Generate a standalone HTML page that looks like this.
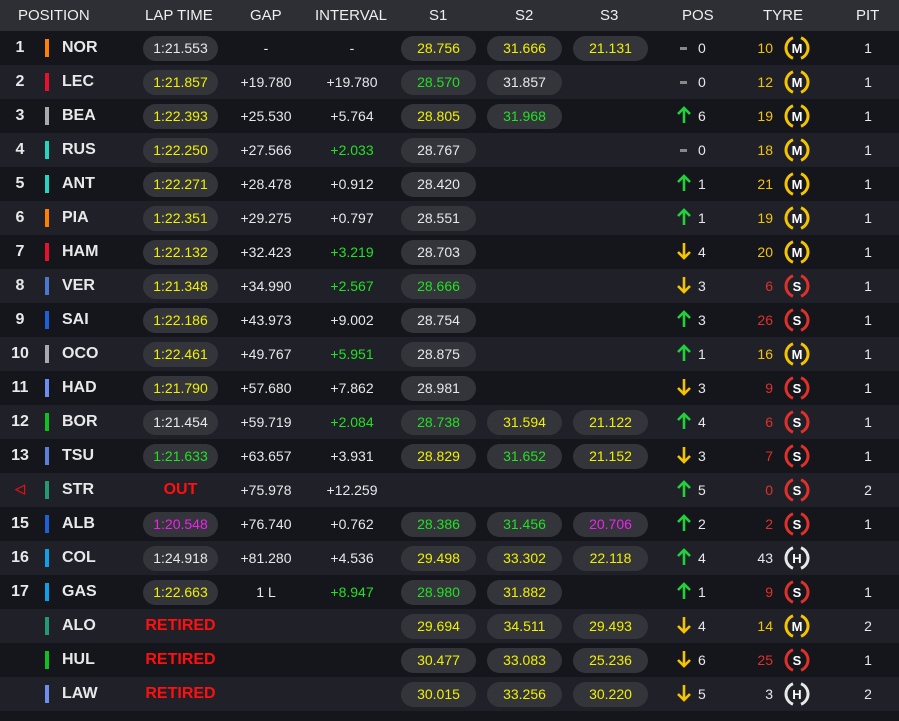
<!DOCTYPE html><html><head><meta charset="utf-8"><style>
*{margin:0;padding:0;box-sizing:border-box}
body{width:899px;height:721px;background:#15161c;font-family:"Liberation Sans",sans-serif;color:#e8e8ea;overflow:hidden;position:relative}
.h{position:absolute;left:0;top:0;width:899px;height:31px;background:#2e2f35;font-size:15px;color:#eee}
.h span{position:absolute;top:7px;text-align:center}
.r{position:relative;height:34px;background:#15161c;font-size:14px}
.r:nth-child(even){background:#202128}
#rows{position:absolute;top:31px;left:0;width:899px}
.r>*{position:absolute}
.p{left:4px;width:32px;text-align:center;top:8px;font-weight:bold;font-size:16px}
.b{left:45px;top:8px;width:4px;height:18px}
.n{left:62px;top:8px;font-weight:bold;font-size:16px}
.pl{top:5px;height:25px;width:75px;border-radius:13px;background:#34353b;text-align:center;line-height:25px}
.lt{left:143px}.s1{left:401px}.s2{left:487px}.s3{left:573px}
.g{left:226px;width:80px;text-align:center;top:9px}
.iv{left:312px;width:80px;text-align:center;top:9px}
.ar{left:676px;top:6px;width:16px;height:20px}
.pn{left:698px;top:9px}
.tl{left:740px;width:33px;text-align:right;top:9px}
.ty{left:784px;top:4px}
.pt{left:848px;width:40px;text-align:center;top:9px}
.txt{left:143px;width:75px;text-align:center;top:8px;color:#ff1010;font-weight:bold;font-size:16px}
.y{color:#f0f000}.gr{color:#22e022}.pu{color:#ee22ee}.ty1{color:#f5c400}.tr{color:#e0302a}
.dash{left:680px;top:16px;width:7px;height:3px;background:#888}
</style></head><body>
<svg width="0" height="0" style="position:absolute"><defs>
<symbol id="up" viewBox="0 0 16 20"><path d="M8 3V18M2 9L8 3L14 9" stroke="#22d03c" stroke-width="2.6" fill="none"/></symbol>
<symbol id="dn" viewBox="0 0 16 20"><path d="M8 2V17M2 11L8 17L14 11" stroke="#f5c400" stroke-width="2.6" fill="none"/></symbol>
<symbol id="tM" viewBox="0 0 26 26"><path d="M9 2.75A11 11 0 0 0 9 23.25M17 2.75A11 11 0 0 1 17 23.25" stroke="#f5c400" stroke-width="3" fill="none"/><text x="13" y="18" text-anchor="middle" font-family="Liberation Sans" font-weight="bold" font-size="13" fill="#fff">M</text></symbol>
<symbol id="tS" viewBox="0 0 26 26"><path d="M9 2.75A11 11 0 0 0 9 23.25M17 2.75A11 11 0 0 1 17 23.25" stroke="#e0302a" stroke-width="3" fill="none"/><text x="13" y="18" text-anchor="middle" font-family="Liberation Sans" font-weight="bold" font-size="13" fill="#fff">S</text></symbol>
<symbol id="tH" viewBox="0 0 26 26"><path d="M9 2.75A11 11 0 0 0 9 23.25M17 2.75A11 11 0 0 1 17 23.25" stroke="#e8e8e8" stroke-width="3" fill="none"/><text x="13" y="18" text-anchor="middle" font-family="Liberation Sans" font-weight="bold" font-size="13" fill="#fff">H</text></symbol>
</defs></svg>
<div class="h"><span style="left:18px">POSITION</span><span style="left:145px">LAP TIME</span><span style="left:250px">GAP</span><span style="left:315px">INTERVAL</span><span style="left:429px">S1</span><span style="left:515px">S2</span><span style="left:600px">S3</span><span style="left:682px">POS</span><span style="left:763px">TYRE</span><span style="left:856px">PIT</span></div>
<div id="rows">
<div class="r"><span class="p">1</span><i class="b" style="background:#ff8000"></i><span class="n">NOR</span><span class="pl lt">1:21.553</span><span class="g">-</span><span class="iv">-</span><span class="pl s1 y">28.756</span><span class="pl s2 y">31.666</span><span class="pl s3 y">21.131</span><i class="dash"></i><span class="pn">0</span><span class="tl ty1">10</span><svg class="ty" width="26" height="26"><use href="#tM"/></svg><span class="pt">1</span></div>
<div class="r"><span class="p">2</span><i class="b" style="background:#e8102d"></i><span class="n">LEC</span><span class="pl lt y">1:21.857</span><span class="g">+19.780</span><span class="iv">+19.780</span><span class="pl s1 gr">28.570</span><span class="pl s2">31.857</span><i class="dash"></i><span class="pn">0</span><span class="tl ty1">12</span><svg class="ty" width="26" height="26"><use href="#tM"/></svg><span class="pt">1</span></div>
<div class="r"><span class="p">3</span><i class="b" style="background:#a8aaae"></i><span class="n">BEA</span><span class="pl lt y">1:22.393</span><span class="g">+25.530</span><span class="iv">+5.764</span><span class="pl s1 y">28.805</span><span class="pl s2 gr">31.968</span><svg class="ar"><use href="#up"/></svg><span class="pn">6</span><span class="tl ty1">19</span><svg class="ty" width="26" height="26"><use href="#tM"/></svg><span class="pt">1</span></div>
<div class="r"><span class="p">4</span><i class="b" style="background:#27d4c0"></i><span class="n">RUS</span><span class="pl lt y">1:22.250</span><span class="g">+27.566</span><span class="iv gr">+2.033</span><span class="pl s1">28.767</span><i class="dash"></i><span class="pn">0</span><span class="tl ty1">18</span><svg class="ty" width="26" height="26"><use href="#tM"/></svg><span class="pt">1</span></div>
<div class="r"><span class="p">5</span><i class="b" style="background:#27d4c0"></i><span class="n">ANT</span><span class="pl lt y">1:22.271</span><span class="g">+28.478</span><span class="iv">+0.912</span><span class="pl s1">28.420</span><svg class="ar"><use href="#up"/></svg><span class="pn">1</span><span class="tl ty1">21</span><svg class="ty" width="26" height="26"><use href="#tM"/></svg><span class="pt">1</span></div>
<div class="r"><span class="p">6</span><i class="b" style="background:#ff8000"></i><span class="n">PIA</span><span class="pl lt y">1:22.351</span><span class="g">+29.275</span><span class="iv">+0.797</span><span class="pl s1">28.551</span><svg class="ar"><use href="#up"/></svg><span class="pn">1</span><span class="tl ty1">19</span><svg class="ty" width="26" height="26"><use href="#tM"/></svg><span class="pt">1</span></div>
<div class="r"><span class="p">7</span><i class="b" style="background:#e8102d"></i><span class="n">HAM</span><span class="pl lt y">1:22.132</span><span class="g">+32.423</span><span class="iv gr">+3.219</span><span class="pl s1">28.703</span><svg class="ar"><use href="#dn"/></svg><span class="pn">4</span><span class="tl ty1">20</span><svg class="ty" width="26" height="26"><use href="#tM"/></svg><span class="pt">1</span></div>
<div class="r"><span class="p">8</span><i class="b" style="background:#4a78d0"></i><span class="n">VER</span><span class="pl lt y">1:21.348</span><span class="g">+34.990</span><span class="iv gr">+2.567</span><span class="pl s1 gr">28.666</span><svg class="ar"><use href="#dn"/></svg><span class="pn">3</span><span class="tl tr">6</span><svg class="ty" width="26" height="26"><use href="#tS"/></svg><span class="pt">1</span></div>
<div class="r"><span class="p">9</span><i class="b" style="background:#1e60d8"></i><span class="n">SAI</span><span class="pl lt y">1:22.186</span><span class="g">+43.973</span><span class="iv">+9.002</span><span class="pl s1">28.754</span><svg class="ar"><use href="#up"/></svg><span class="pn">3</span><span class="tl tr">26</span><svg class="ty" width="26" height="26"><use href="#tS"/></svg><span class="pt">1</span></div>
<div class="r"><span class="p">10</span><i class="b" style="background:#a8aaae"></i><span class="n">OCO</span><span class="pl lt y">1:22.461</span><span class="g">+49.767</span><span class="iv gr">+5.951</span><span class="pl s1">28.875</span><svg class="ar"><use href="#up"/></svg><span class="pn">1</span><span class="tl ty1">16</span><svg class="ty" width="26" height="26"><use href="#tM"/></svg><span class="pt">1</span></div>
<div class="r"><span class="p">11</span><i class="b" style="background:#6c8ef0"></i><span class="n">HAD</span><span class="pl lt y">1:21.790</span><span class="g">+57.680</span><span class="iv">+7.862</span><span class="pl s1">28.981</span><svg class="ar"><use href="#dn"/></svg><span class="pn">3</span><span class="tl tr">9</span><svg class="ty" width="26" height="26"><use href="#tS"/></svg><span class="pt">1</span></div>
<div class="r"><span class="p">12</span><i class="b" style="background:#10c020"></i><span class="n">BOR</span><span class="pl lt">1:21.454</span><span class="g">+59.719</span><span class="iv gr">+2.084</span><span class="pl s1 gr">28.738</span><span class="pl s2 y">31.594</span><span class="pl s3 y">21.122</span><svg class="ar"><use href="#up"/></svg><span class="pn">4</span><span class="tl tr">6</span><svg class="ty" width="26" height="26"><use href="#tS"/></svg><span class="pt">1</span></div>
<div class="r"><span class="p">13</span><i class="b" style="background:#5a80d8"></i><span class="n">TSU</span><span class="pl lt gr">1:21.633</span><span class="g">+63.657</span><span class="iv">+3.931</span><span class="pl s1 y">28.829</span><span class="pl s2 gr">31.652</span><span class="pl s3 y">21.152</span><svg class="ar"><use href="#dn"/></svg><span class="pn">3</span><span class="tl tr">7</span><svg class="ty" width="26" height="26"><use href="#tS"/></svg><span class="pt">1</span></div>
<div class="r"><span class="p" style="color:#e01010;font-size:13px">◁</span><i class="b" style="background:#229971"></i><span class="n">STR</span><span class="txt">OUT</span><span class="g">+75.978</span><span class="iv">+12.259</span><svg class="ar"><use href="#up"/></svg><span class="pn">5</span><span class="tl tr">0</span><svg class="ty" width="26" height="26"><use href="#tS"/></svg><span class="pt">2</span></div>
<div class="r"><span class="p">15</span><i class="b" style="background:#1e60d8"></i><span class="n">ALB</span><span class="pl lt pu">1:20.548</span><span class="g">+76.740</span><span class="iv">+0.762</span><span class="pl s1 gr">28.386</span><span class="pl s2 gr">31.456</span><span class="pl s3 pu">20.706</span><svg class="ar"><use href="#up"/></svg><span class="pn">2</span><span class="tl tr">2</span><svg class="ty" width="26" height="26"><use href="#tS"/></svg><span class="pt">1</span></div>
<div class="r"><span class="p">16</span><i class="b" style="background:#10a0e8"></i><span class="n">COL</span><span class="pl lt">1:24.918</span><span class="g">+81.280</span><span class="iv">+4.536</span><span class="pl s1 y">29.498</span><span class="pl s2 y">33.302</span><span class="pl s3 y">22.118</span><svg class="ar"><use href="#up"/></svg><span class="pn">4</span><span class="tl">43</span><svg class="ty" width="26" height="26"><use href="#tH"/></svg></div>
<div class="r"><span class="p">17</span><i class="b" style="background:#10a0e8"></i><span class="n">GAS</span><span class="pl lt y">1:22.663</span><span class="g">1 L</span><span class="iv gr">+8.947</span><span class="pl s1 gr">28.980</span><span class="pl s2 y">31.882</span><svg class="ar"><use href="#up"/></svg><span class="pn">1</span><span class="tl tr">9</span><svg class="ty" width="26" height="26"><use href="#tS"/></svg><span class="pt">1</span></div>
<div class="r"><i class="b" style="background:#229971"></i><span class="n">ALO</span><span class="txt">RETIRED</span><span class="pl s1 y">29.694</span><span class="pl s2 y">34.511</span><span class="pl s3 y">29.493</span><svg class="ar"><use href="#dn"/></svg><span class="pn">4</span><span class="tl ty1">14</span><svg class="ty" width="26" height="26"><use href="#tM"/></svg><span class="pt">2</span></div>
<div class="r"><i class="b" style="background:#10c020"></i><span class="n">HUL</span><span class="txt">RETIRED</span><span class="pl s1 y">30.477</span><span class="pl s2 y">33.083</span><span class="pl s3 y">25.236</span><svg class="ar"><use href="#dn"/></svg><span class="pn">6</span><span class="tl tr">25</span><svg class="ty" width="26" height="26"><use href="#tS"/></svg><span class="pt">1</span></div>
<div class="r"><i class="b" style="background:#6c8ef0"></i><span class="n">LAW</span><span class="txt">RETIRED</span><span class="pl s1 y">30.015</span><span class="pl s2 y">33.256</span><span class="pl s3 y">30.220</span><svg class="ar"><use href="#dn"/></svg><span class="pn">5</span><span class="tl">3</span><svg class="ty" width="26" height="26"><use href="#tH"/></svg><span class="pt">2</span></div>
</div>
</body></html>
